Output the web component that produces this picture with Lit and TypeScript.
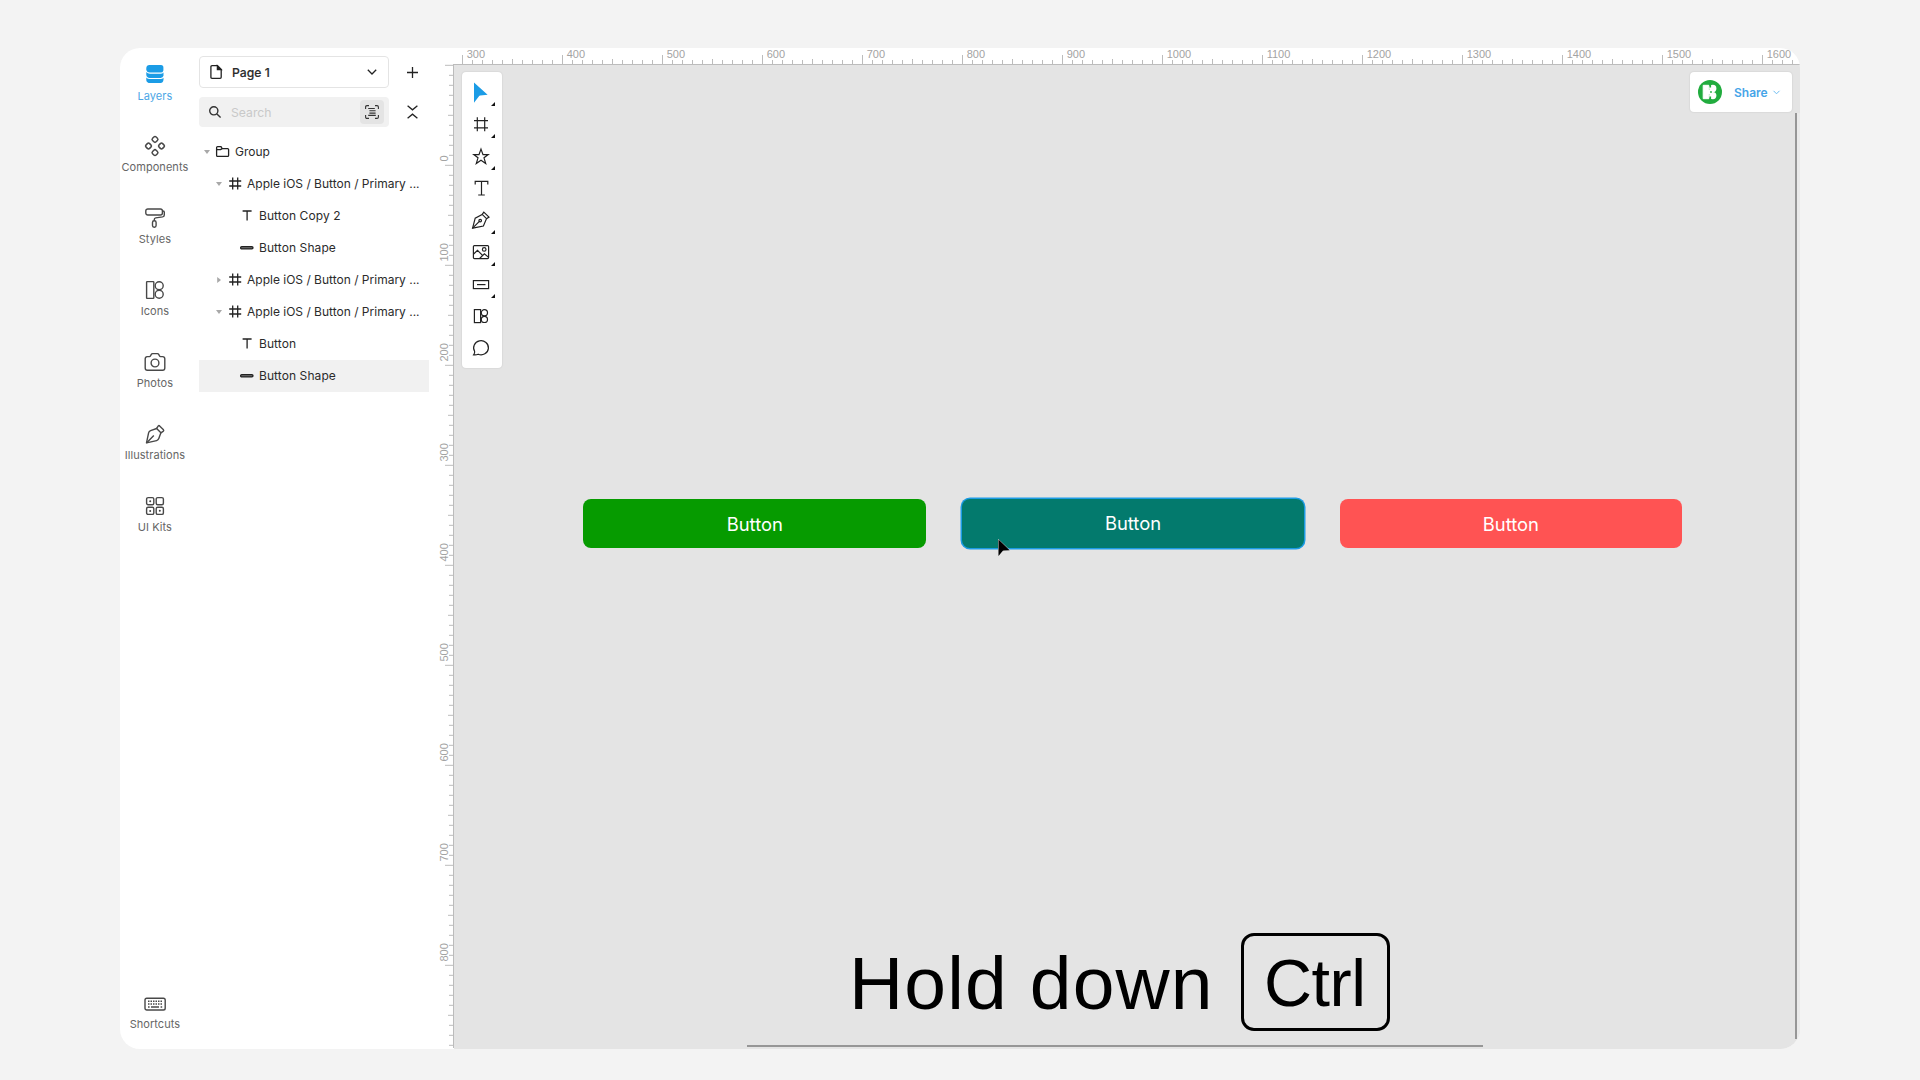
import { LitElement, html, svg, css } from "lit";
import { customElement, property } from "lit/decorators.js";
import { classMap } from "lit/directives/class-map.js";

const hash = svg`<path d="M3.5 0V12M8.5 0V12M0 3.5H12M0 8.5H12"/>`;
const bricks = svg`<rect x="1.6" y="1.6" width="7.2" height="16.8" rx=".6"/><circle cx="14.2" cy="5.8" r="4"/><circle cx="14.2" cy="14.2" r="4"/>`;

const railIcons: Record<string, unknown> = {
  layers: svg`<g fill="#1b9ce6" stroke="none"><path d="M4.5 1H16Q18.4 1 18.4 3.6V6.4Q17.9 8.6 15.8 8.6H4.8Q1.6 8.4 1.3 5.6V4Q1.5 1 4.5 1Z"/><path d="M1.3 8Q2.6 9.7 5 9.7H15.5Q17.5 9.6 18.5 8.4V11.8Q17.9 13.9 15.6 13.9H4.8Q1.6 13.7 1.3 11Z"/><path d="M1.3 13.4Q2.6 15 5 15H15.5Q17.5 15 18.5 13.8V15.8Q18 19 15.6 19H5.2Q1.6 19 1.3 16.2Z"/></g>`,
  components: svg`<g stroke-width="1.5">${[[10, 3.4], [3.5, 10], [16.5, 10], [10, 16.6]].map(
    ([x, y]) => svg`<rect x=${x - 2.5} y=${y - 2.5} width="5" height="5" rx="1.6" transform="rotate(45 ${x} ${y})"/>`)}</g>`,
  styles: svg`<rect x=".8" y="1" width="16.6" height="6" rx="2"/><path d="M17.4 3H18Q19.3 3 19.3 4.3V7Q19.3 8.6 17.6 8.9L10.7 9.9Q9.3 10.1 9.3 11.4V12.8"/><rect x="7.5" y="12.8" width="3.6" height="6.5" rx="1.7"/>`,
  icons: bricks,
  photos: svg`<path d="M1.8 4.6H4.4Q5.2 4.6 5.6 3.8L6.3 2.4Q6.7 1.6 7.6 1.6H12.4Q13.3 1.6 13.7 2.4L14.4 3.8Q14.8 4.6 15.6 4.6H17.6Q19.8 4.6 19.8 6.8V16Q19.8 18.2 17.6 18.2H2.4Q.2 18.2 .2 16V6.8Q.2 4.6 2.4 4.6Z"/><circle cx="10" cy="11" r="3.9"/>`,
  illustrations: svg`<path d="M1.5 18.9L3.6 8.9Q4 7.3 5.6 6.7L11.6 4.5L15.9 8.8L13.8 14.6Q13.2 16.2 11.6 16.6Z"/><path d="M11.6 4.5L13.3 1.9Q13.9 1.3 14.6 1.9L18.5 5.8Q19 6.5 18.4 7.1L15.9 8.8M1.5 18.9L8.8 11.6"/>`,
  kits: svg`<rect x="1.6" y="1.6" width="7.2" height="7.2" rx="1.5"/><rect x="11.2" y="1.6" width="7.2" height="7.2" rx="1.5"/><rect x="1.6" y="11.2" width="7.2" height="7.2" rx="1.5"/><rect x="11.2" y="11.2" width="7.2" height="7.2" rx="1.5"/><g fill="#444" stroke="none"><circle cx="5.2" cy="5.2" r="1"/><circle cx="5.2" cy="15" r="1"/><circle cx="14.8" cy="14.8" r="1"/></g>`,
  keyboard: svg`<rect x="0" y="4.2" width="20.2" height="11.8" rx="1.8"/><path stroke-dasharray="1.5 1" stroke-width="1.6" d="M3 7.2H17.6M3 10H17.6"/><path stroke-width="1.6" d="M3 13H4.6M6 13H14M15.6 13H17.2"/>`,
};

const toolIcons: Record<string, unknown> = {
  pointer: svg`<path d="M3 .4V20.8L7.8 14.4Q8.3 13.7 9.2 13.6L16.6 12.8Z" fill="#1b9ce6" stroke="none"/>`,
  frame: svg`<path d="M6.3 3.2V17.2M13.7 3.2V17.2M3 6.6H17M3 13.8H17"/>`,
  star: svg`<path d="M10 3.1L12 8.6H17.2L13 11.8L14.7 17.5L10 14.2L5.3 17.5L7 11.8L2.8 8.6H8Z"/>`,
  text: svg`<path d="M4.2 6.6V3.4H16.8V6.6M10.5 3.4V17M7.2 17H13.8"/>`,
  pen: svg`<path d="M1.6 18.2L4.2 8.2L11.2 4.4L15.5 8.7L12.4 16Z"/><path d="M11.2 4.4L12.8 2.1L18 7.1L15.5 8.7M1.6 18.2L8.4 11.4"/><circle cx="9.2" cy="10.6" r="1.3"/>`,
  image: svg`<rect x="2.4" y="3.6" width="15.2" height="13" rx="1"/><circle cx="13.2" cy="7.4" r="1.8"/><path d="M2.4 12.2L6.5 8.4L11.8 13.6M8.8 16.2L13.4 11.8L17.6 15.4"/>`,
  control: svg`<rect x="2.4" y="6.6" width="15.2" height="8"/><path d="M6 10.6H14.5"/>`,
  icons: svg`<rect x="3.4" y="3.6" width="6.2" height="13"/><circle cx="13.4" cy="6.8" r="3.1"/><circle cx="13.4" cy="13.4" r="3.1"/>`,
  comment: svg`<path d="M2.6 16.8Q4 15.2 3.6 13.2A7.4 7 0 1 1 7.2 16.2Q5 17.2 2.6 16.8Z"/>`,
};

const rail = [
  ["layers", "Layers"], ["components", "Components"], ["styles", "Styles"], ["icons", "Icons"],
  ["photos", "Photos"], ["illustrations", "Illustrations"], ["kits", "UI Kits"],
];

type Node = { label: string; kind: "group" | "frame" | "text" | "shape"; open?: boolean; selected?: boolean };
const FRAME = "Apple iOS / Button / Primary ...";
const nodes: Node[] = [
  { label: "Group", kind: "group", open: true },
  { label: FRAME, kind: "frame", open: true },
  { label: "Button Copy 2", kind: "text" },
  { label: "Button Shape", kind: "shape" },
  { label: FRAME, kind: "frame", open: false },
  { label: FRAME, kind: "frame", open: true },
  { label: "Button", kind: "text" },
  { label: "Button Shape", kind: "shape", selected: true },
];
const nodeIcons = {
  group: svg`<path d="M.6 2.6Q.6 1.6 1.6 1.6H5L6.2 3.6H11.6Q12.6 3.6 12.6 4.6V10.4Q12.6 11.4 11.6 11.4H1.6Q.6 11.4 .6 10.4ZM.6 4.6H4.6L6.2 3.6"/>`,
  frame: svg`<g transform="translate(.2 .5)">${hash}</g>`,
  text: svg`<path d="M2.6 2H11.6M7.1 2V11.4"/>`,
  shape: svg`<rect x=".6" y="5.7" width="12.4" height="2.2" rx="1.1" fill="#777"/>`,
};

@customElement("editor-ruler")
class EditorRuler extends LitElement {
  @property({ type: Boolean, reflect: true }) vertical = false;

  static styles = css`
    :host { display: block; }
    svg { display: block; }
    path { stroke: #bcbcbc; fill: none; }
    text { font: 11px "Liberation Sans", Arial, sans-serif; fill: #a3a3a3; }
  `;

  private ticks(first: number, length: number, edge: number) {
    let d = "";
    for (let i = 0; first + i * 10 < length; i++) {
      const at = first + i * 10;
      const size = i % 10 === 0 ? (this.vertical ? 8 : 9) : i % 5 === 0 ? 5 : 4;
      d += this.vertical ? `M${edge - size} ${at}H${edge}` : `M${at} ${edge - size}V${edge}`;
    }
    return d;
  }

  render() {
    if (this.vertical) {
      return html`<svg width="24" height="984">
        <path d=${this.ticks(1.3, 984, 23)} />
        <path d="M23.5 0V984" />
        ${Array.from({ length: 9 }, (_, i) => svg`<text transform="translate(18 ${97.6 + i * 100}) rotate(-90)">${i * 100}</text>`)}
      </svg>`;
    }
    return html`<svg width="1346" height="17">
      <path d=${this.ticks(8.5, 1340, 16)} />
      <path d="M0 16.5H1346" />
      ${Array.from({ length: 14 }, (_, i) => svg`<text x=${12.7 + i * 100} y="10">${(i + 3) * 100}</text>`)}
    </svg>`;
  }
}

@customElement("app-root")
class AppRoot extends LitElement {
  static styles = css`
    :host {
      display: block; box-sizing: border-box; width: 1920px; height: 1080px; padding: 48px 120px 0;
      background: #f3f3f3; overflow: hidden; font-family: Inter, "Liberation Sans", sans-serif; color: #2b2b2b;
    }
    * { box-sizing: border-box; }
    svg { display: block; fill: none; overflow: visible; }
    .window {
      display: grid; grid-template-columns: 79px 231px 24px 1346px; grid-template-rows: 17px 983.5px;
      width: 1680px; height: 1000.5px; background: #fff; border-radius: 20px; overflow: hidden;
    }
    .rail {
      grid-row: 1 / 3; display: flex; flex-direction: column; align-items: center;
      padding: 16px 9.2px 15.5px 0;
    }
    .rail-item {
      width: 100%; height: 72px; flex: none; display: flex; flex-direction: column; align-items: center;
      font-size: 11px; line-height: 14px; letter-spacing: 0.05px; color: #666; white-space: nowrap;
    }
    .rail-item svg { stroke: #484848; stroke-width: 1.4; stroke-linejoin: round; stroke-linecap: butt; flex: none; }
    .rail-item span { margin-top: 4.4px; }
    .rail-item.active { color: #4ba6e6; }
    .rail-item.active span { margin-top: 5px; }
    .rail-item.bottom { margin-top: auto; height: 39px; }
    .rail-item.bottom span { margin-top: 3px; }
    .panel { grid-row: 1 / 3; padding-top: 8px; width: 230px; }
    .line { display: flex; align-items: center; }
    .line.search-line { margin-top: 9px; }
    .select, .search { width: 190px; display: flex; align-items: center; border-radius: 4px; }
    .select { height: 32px; border: 1px solid #e4e4e4; padding: 0 11px 0 10px; font-size: 12.2px; font-weight: 500; }
    .select span { flex: 1; margin-left: 10px; -webkit-text-stroke: 0.15px; }
    .select svg, .panel .action { stroke: #222; stroke-width: 1.3; }
    .search { height: 30px; background: #f1f1f1; padding: 0 5px 0 9.5px; font-size: 12.2px; color: #c9c9c9; }
    .search span { flex: 1; margin-left: 10.5px; padding-top: 1px; }
    .search svg { stroke: #333; stroke-width: 1.4; }
    .search .scan svg { stroke-width: 1.1; }
    .scan { width: 24px; height: 24px; border-radius: 4px; background: #e4e4e4; display: grid; place-items: center; }
    .action { margin-left: 17px; }
    .tree { margin-top: 9px; }
    .row { height: 32px; display: flex; align-items: center; font-size: 12px; white-space: nowrap; padding-bottom: 1px; }
    .row.selected { background: #f1f1f1; }
    .row svg { stroke: #222; stroke-width: 1.3; flex: none; }
    .row .caret { fill: #a8a8a8; stroke: none; margin-right: 7px; }
    .row span { margin-left: 5px; }
    .group { padding-left: 5px; }
    .group svg:not(.caret) { margin-left: -0.7px; margin-right: 0.7px; }
    .frame { padding-left: 17px; }
    .text, .shape { padding-left: 41px; }
    .text span, .shape span { margin-left: 6px; letter-spacing: 0.08px; }
    .ruler-left { grid-column: 3; grid-row: 2; margin-top: -1px; }
    .ruler-top { grid-column: 4; grid-row: 1; }
    .canvas { grid-column: 4; grid-row: 2; background: #e4e4e4; position: relative; overflow: hidden; }
    .toolbar {
      position: absolute; left: 8px; top: 7px; width: 40px; height: 296px; padding: 4px 0; border-radius: 4px;
      background: #fff; box-shadow: 0 0 2px rgba(0, 0, 0, 0.14);
    }
    .tool { height: 32px; padding: 6px 6px 6px 9.4px; display: flex; align-items: flex-end; }
    .tool svg { stroke: #222; stroke-width: 1.2; flex: none; }
    .tool .more { fill: #111; stroke: none; margin: 0 0 -4px 0; }
    .share {
      position: absolute; left: 1236px; top: 7px; width: 102px; height: 40px; border-radius: 4px; background: #fff;
      display: flex; align-items: center; padding-left: 8px; box-shadow: 0 0 2px rgba(0, 0, 0, 0.14);
      font-size: 12px; font-weight: 600; color: #46a5e8;
    }
    .share span { margin: 1px 5px 0 12px; }
    .share .chevron { margin-top: 1px; }
    .artboard-button {
      position: absolute; top: 433.7px; width: 342.8px; height: 49.8px; border-radius: 8px; display: grid;
      place-items: center; color: #fff; font-size: 18.4px;
    }
    .green { left: 129.4px; background: #069b00; }
    .teal { left: 508px; width: 342px; height: 49.3px; background: #037a6d; box-shadow: 0 0 0 1.5px #1b9be4; }
    .red { left: 885.5px; background: #ff5353; }
    .cursor { position: absolute; left: 542.5px; top: 472.5px; }
    .hint {
      position: absolute; left: 395px; top: 868px; height: 98px; display: flex; color: #000; white-space: nowrap;
      font-family: "Liberation Sans", Arial, sans-serif;
    }
    .hint-text { font-size: 75px; line-height: 100px; letter-spacing: 1.15px; width: 392px; }
    .key {
      width: 149px; height: 98px; border: 3.5px solid #000; border-radius: 13px; font-size: 66.5px; line-height: 94px;
      padding-left: 20px; letter-spacing: -0.5px;
    }
    .bar { position: absolute; background: #969696; }
    .bar.v { left: 1341px; top: 48px; width: 2px; height: 926px; }
    .bar.h { left: 293px; top: 980px; width: 736px; height: 2px; }
    .edge { position: absolute; left: 1343px; top: 48px; width: 3px; bottom: 0; background: #eaeaea; }
  `;

  private railItem([icon, label]: string[], state = "") {
    return html`<div class="rail-item ${state}">
      <svg width="20" height="20">${railIcons[icon]}</svg><span>${label}</span>
    </div>`;
  }

  private row(n: Node) {
    return html`<div class=${classMap({ row: true, [n.kind]: true, selected: !!n.selected })}>
      ${n.open === undefined ? "" : html`<svg class="caret" width="6" height="6">
        <path d=${n.open ? "M0 1H6L3 5Z" : "M1.2 0V6L5 3Z"} /></svg>`}
      <svg width="13" height="13">${nodeIcons[n.kind]}</svg><span>${n.label}</span>
    </div>`;
  }

  render() {
    const menus = ["pointer", "frame", "star", "pen", "image", "control"];
    return html`<div class="window">
      <nav class="rail">
        ${rail.map((item, i) => this.railItem(item, i === 0 ? "active" : ""))}
        ${this.railItem(["keyboard", "Shortcuts"], "bottom")}
      </nav>
      <section class="panel">
        <div class="line">
          <div class="select">
            <svg width="12" height="14"><path d="M2 .7H7.4L11.2 4.5V12.3Q11.2 13.4 10.1 13.4H2Q.9 13.4 .9 12.3V1.8Q.9 .7 2 .7Z"/><path d="M7.4 .7V4.5H11.2Z" fill="#222"/></svg>
            <span>Page 1</span>
            <svg width="10" height="6"><path d="M.8 .8L5 5L9.2 .8"/></svg>
          </div>
          <svg class="action" width="13" height="13"><path d="M6.5 1V12M1 6.5H12"/></svg>
        </div>
        <div class="line search-line">
          <div class="search">
            <svg width="12" height="12"><circle cx="4.8" cy="4.8" r="4.1"/><path d="M7.9 7.9L11.6 11.6"/></svg>
            <span>Search</span>
            <div class="scan"><svg width="14" height="14"><path d="M.6 4V2Q.6 .6 2 .6H4M10 .6H12Q13.4 .6 13.4 2V4M13.4 10V12Q13.4 13.4 12 13.4H10M4 13.4H2Q.6 13.4 .6 12V10M3.2 3.5H9.8M4.4 5.8H10.6M4.4 8.1H10.6M3.2 10.4H10.8"/></svg></div>
          </div>
          <svg class="action" width="13" height="14"><path d="M1.6 .8L6.5 4.8L11.4 .8M1.6 13.2L6.5 9.2L11.4 13.2"/></svg>
        </div>
        <div class="tree">${nodes.map((n) => this.row(n))}</div>
      </section>
      <editor-ruler class="ruler-left" vertical></editor-ruler>
      <editor-ruler class="ruler-top"></editor-ruler>
      <main class="canvas">
        <div class="artboard-button green">Button</div>
        <div class="artboard-button teal">Button</div>
        <div class="artboard-button red">Button</div>
        <svg class="cursor" width="16" height="20"><path d="M1.5 1.5V18L5.2 13.4Q5.8 12.7 6.8 12.6L12.6 12.2Z" fill="#000" stroke="#ddd" stroke-width="1" paint-order="stroke"/></svg>
        <div class="hint"><div class="hint-text">Hold down</div><div class="key">Ctrl</div></div>
        <div class="edge"></div>
        <div class="bar v"></div>
        <div class="bar h"></div>
        <div class="toolbar">
          ${Object.keys(toolIcons).map((name) => html`<div class="tool">
            <svg width="20" height="20">${toolIcons[name]}</svg>
            ${menus.includes(name) ? html`<svg class="more" width="4" height="4"><path d="M0 4L4 0V4Z"/></svg>` : ""}
          </div>`)}
        </div>
        <div class="share">
          <svg width="24" height="24"><circle cx="12" cy="12" r="12" fill="#21ac3e"/><path d="M5.2 5.3H10.8V18.7H5.2Z" fill="#fff" stroke="#fff"/><g fill="#fff"><circle cx="14.8" cy="8.4" r="3.6"/><circle cx="14.8" cy="15.6" r="3.6"/><rect x="10" y="10" width="5" height="4"/></g><path d="M12.4 5V7.6M12.4 16.6V19" stroke="#21ac3e" stroke-width="1.4"/><circle cx="13" cy="12" r=".9" fill="#21ac3e"/></svg>
          <span>Share</span>
          <svg class="chevron" width="7" height="5" stroke="#6dbcf0"><path d="M.5 .8L3.5 3.8L6.5 .8"/></svg>
        </div>
      </main>
    </div>`;
  }
}
